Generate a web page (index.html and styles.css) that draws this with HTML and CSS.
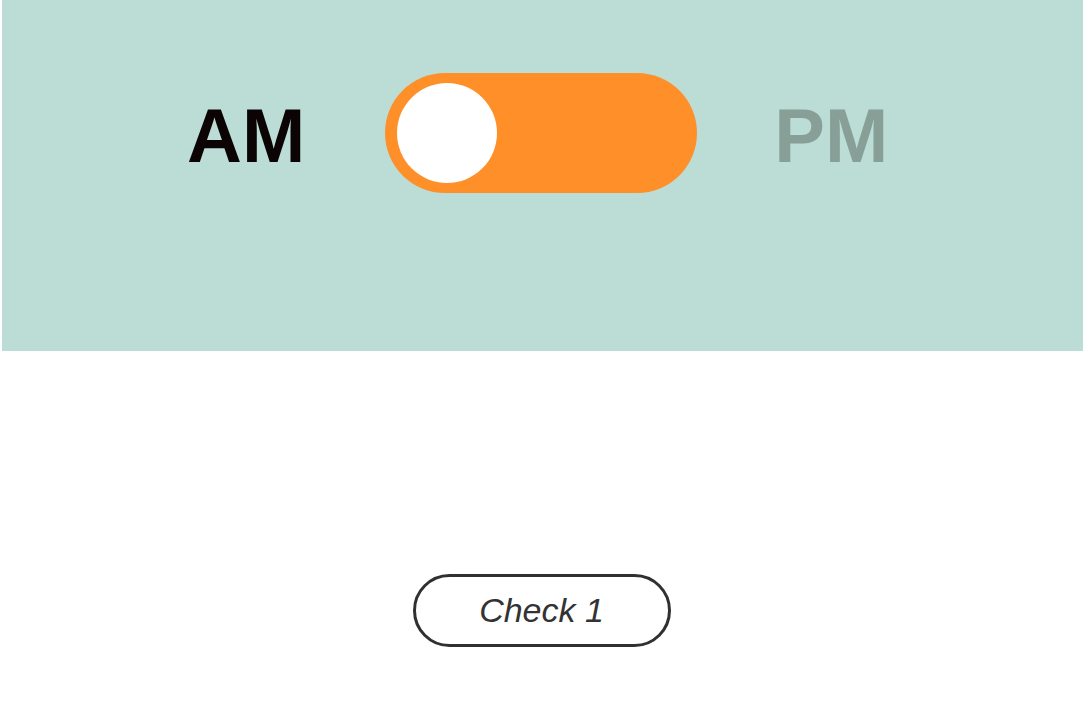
FILE: index.html
```html
<!DOCTYPE html>
<html>
<head>
<meta charset="utf-8">
<link rel="stylesheet" href="styles.css">
</head>
<body>
<div class="panel">
  <div class="row">
    <span class="label am">AM</span>
    <div class="toggle"><div class="knob"></div></div>
    <span class="label pm">PM</span>
  </div>
</div>
<div class="actions">
  <button class="check">Check 1</button>
</div>
</body>
</html>
```
FILE: styles.css
```css
html, body {
  margin: 0;
  padding: 0;
  background: #ffffff;
}
body {
  font-family: "Liberation Sans", Arial, sans-serif;
  width: 1083px;
  height: 720px;
  overflow: hidden;
}
.panel {
  margin-left: 2px;
  height: 351px;
  background: #bbddd6;
}
.row {
  display: flex;
  align-items: flex-start;
  padding-top: 73px;
  padding-left: 185px;
}
.label {
  font-size: 76px;
  font-weight: 700;
  line-height: 1;
  margin-top: 25px;
}
.am {
  color: #0c0404;
  margin-right: 80px;
}
.pm {
  color: #879f97;
  margin-left: 77px;
}
.toggle {
  width: 312px;
  height: 120px;
  border-radius: 60px;
  background: #fe8f29;
  display: flex;
  align-items: center;
  padding-left: 12px;
  box-sizing: border-box;
}
.knob {
  width: 100px;
  height: 100px;
  border-radius: 50%;
  background: #ffffff;
}
.actions {
  display: flex;
  justify-content: center;
  margin-top: 223px;
}
.check {
  width: 258px;
  height: 73px;
  box-sizing: border-box;
  border: 3px solid #303030;
  border-radius: 37px;
  background: #ffffff;
  font-family: "Liberation Sans", Arial, sans-serif;
  font-style: italic;
  font-size: 34px;
  color: #333333;
  padding: 0;
  display: flex;
  align-items: center;
  justify-content: center;
}
```
